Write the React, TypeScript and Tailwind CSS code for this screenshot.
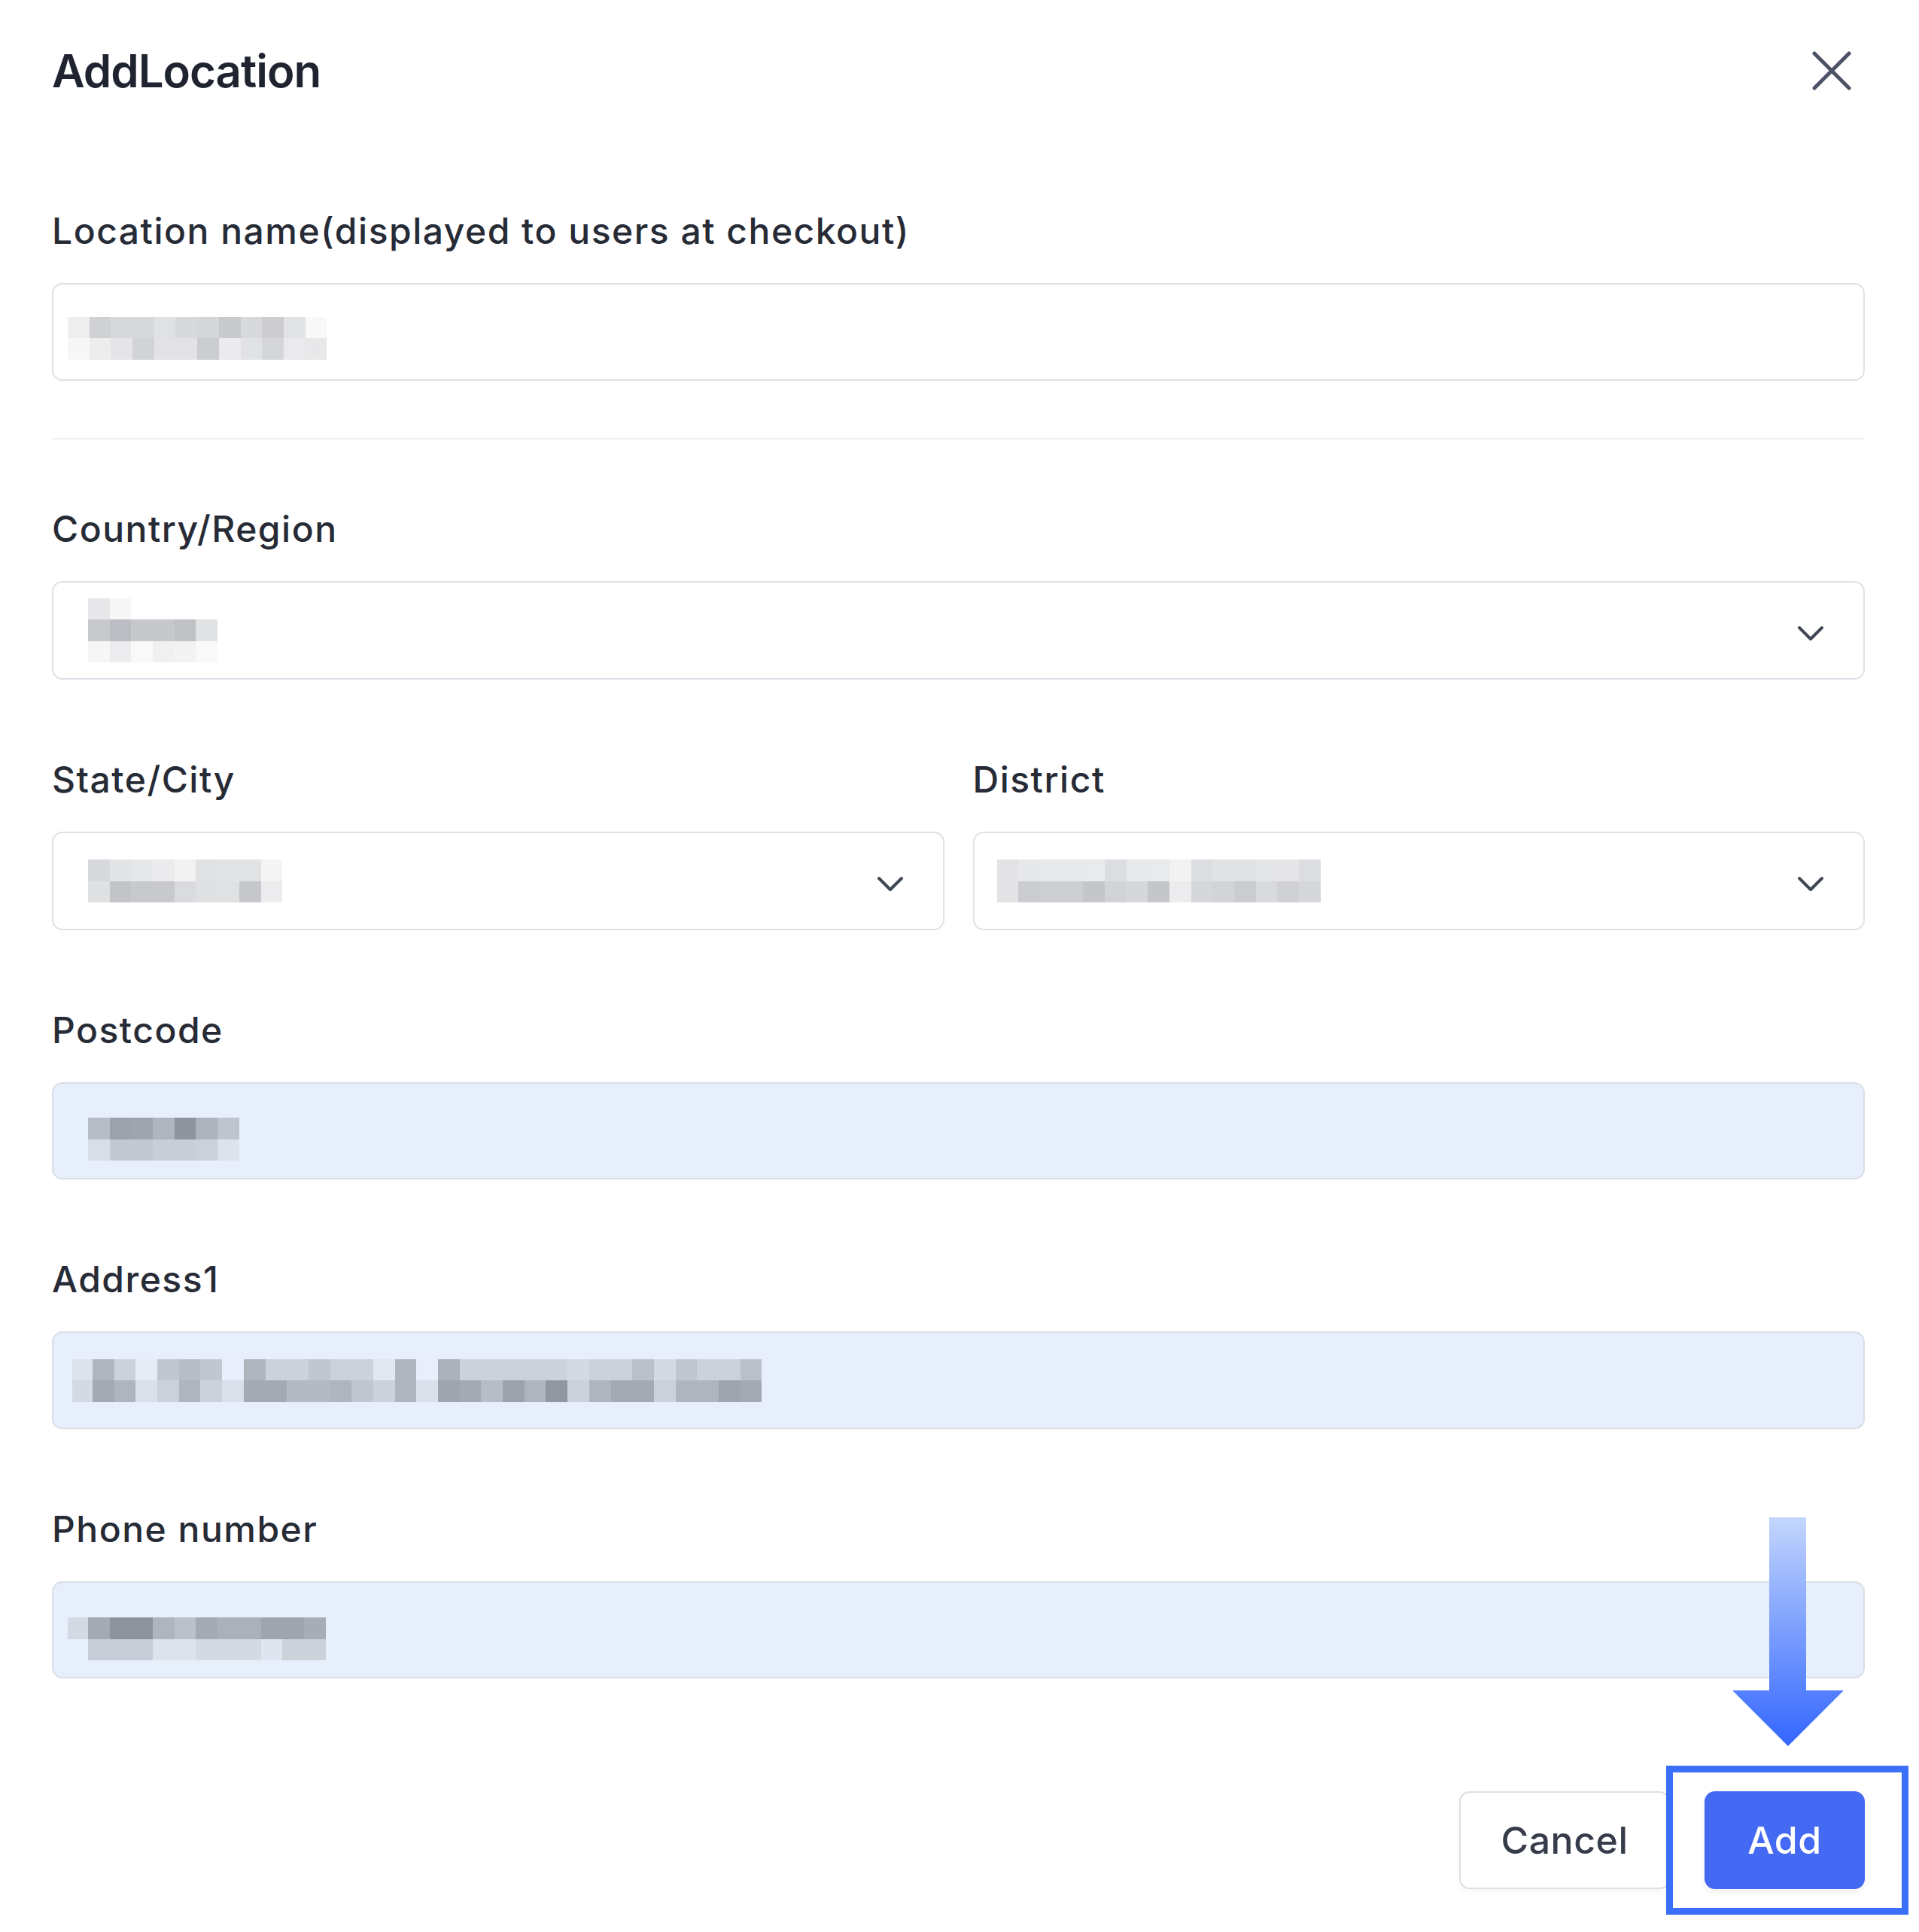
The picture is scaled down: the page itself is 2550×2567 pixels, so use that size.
import React from "react";

type Blob = { rows: string[][]; lead?: string[] };

const PixelBlob = ({ rows, lead }: Blob) => (
  <div className="flex">
    {lead && (
      <div className="flex flex-col">
        {lead.map((c, i) => (
          <div key={i} className="w-[27px] h-[28.5px]" style={{ backgroundColor: c }} />
        ))}
      </div>
    )}
    <div className="flex flex-col">
      {rows.map((r, i) => (
        <div key={i} className="flex">
          {r.map((c, j) => (
            <div key={j} className="w-[28.7px] h-[28.5px]" style={{ backgroundColor: c }} />
          ))}
        </div>
      ))}
    </div>
  </div>
);

const Chevron = () => (
  <svg width="36" height="22" viewBox="0 0 36 22" fill="none" className="mt-[8px] shrink-0">
    <polyline points="3,3 18,18 33,3" stroke="#3f4654" strokeWidth="4" strokeLinecap="round" strokeLinejoin="round" />
  </svg>
);

const Label = ({ children }: { children: React.ReactNode }) => (
  <div className="text-[48px] leading-[58px] font-medium text-[#272b36] tracking-[1.5px]">{children}</div>
);

const locationBlob: string[][] = [
  ["#eeeeef", "#d0d1d5", "#d8d9dc", "#d8d9dc", "#e0e1e3", "#d8d9dc", "#d5d6d9", "#c9cacd", "#d8d9dc", "#cdcdd1", "#e2e3e5", "#f8f8f8"],
  ["#f7f7f7", "#ededee", "#e5e5e7", "#d2d3d6", "#e3e3e5", "#e3e3e5", "#cccdd1", "#ebebed", "#e1e2e4", "#d5d6d9", "#eaeaec", "#e8e8ea"],
];

const countryBlob: string[][] = [
  ["#e8e8ea", "#f7f7f7", "#ffffff", "#ffffff", "#ffffff", "#ffffff"],
  ["#c8c9cd", "#bcbdc2", "#c7c8cc", "#c7c8cc", "#c0c1c5", "#e1e2e4"],
  ["#f6f6f7", "#ececee", "#f9f9f9", "#f0f0f1", "#f3f3f4", "#f9f9f9"],
];

const stateBlob: string[][] = [
  ["#d7d8db", "#e3e4e6", "#e6e7e9", "#ebebed", "#f2f2f3", "#e0e1e3", "#e2e3e5", "#e2e3e5", "#f5f5f6"],
  ["#dfe0e2", "#c3c4c8", "#c8c9cd", "#c8c9cd", "#dadbde", "#dfe0e2", "#e0e1e3", "#c6c7cb", "#ececee"],
];

const districtBlob: string[][] = [
  ["#e3e3e5", "#e7e8ea", "#e8e9eb", "#e8e9eb", "#e9eaec", "#dcdde0", "#e8e9eb", "#e9eaec", "#f2f2f3", "#dcdde0", "#e1e2e4", "#e1e2e4", "#e4e5e7", "#e6e6e8", "#dcdde0"],
  ["#e3e3e5", "#cbccd0", "#cecfd3", "#cecfd3", "#c5c6ca", "#d2d3d6", "#d6d7da", "#c5c6ca", "#ececee", "#d6d7da", "#d3d4d7", "#cbccd0", "#d9dadd", "#d0d1d5", "#d6d7da"],
];

const postBlob: string[][] = [
  ["#b8bcc6", "#9da1ab", "#a0a4ae", "#b0b4be", "#8f939d", "#aeb2bc", "#c0c4ce"],
  ["#d8dde8", "#c4c8d3", "#c4c8d3", "#c9cdd8", "#c9cdd8", "#ccd0db", "#dde2ec"],
];

const addrPairs: [string, string][] = [
  ["#b0b4bd", "#a5a9b2"], ["#cdd1da", "#b0b4bd"], ["#e6ebf6", "#dadfea"], ["#c2c6d0", "#cbd0da"],
  ["#b8bcc6", "#b0b4bd"], ["#c2c6d0", "#cdd1da"], ["#e8eefb", "#dadfea"], ["#b0b4bd", "#a5a9b2"],
  ["#cdd1da", "#a5a9b2"], ["#cdd1da", "#b5b9c3"], ["#c2c6d0", "#b5b9c3"], ["#cdd1da", "#b0b4bd"],
  ["#cdd1da", "#c2c6d0"], ["#e2e7f1", "#cdd1da"], ["#b0b4bd", "#b0b4bd"], ["#e8eefb", "#dadfea"],
  ["#acb0ba", "#a0a4ae"], ["#cdd1da", "#a5a9b2"], ["#cdd1da", "#b8bcc6"], ["#cdd1da", "#9ea2ac"],
  ["#cdd1da", "#b0b4bd"], ["#cdd1da", "#9196a0"], ["#d5d9e3", "#cdd1da"], ["#cdd1da", "#b0b4bd"],
  ["#cdd1da", "#a5a9b2"], ["#bcc0ca", "#a5a9b2"], ["#d5d9e3", "#cdd1da"], ["#c2c6d0", "#b0b4bd"],
  ["#cdd1da", "#b0b4bd"], ["#cdd1da", "#a0a4ae"], ["#bcc0ca", "#a5a9b2"],
];
const addrBlob: string[][] = [addrPairs.map((p) => p[0]), addrPairs.map((p) => p[1])];

const phonePairs: [string, string][] = [
  ["#a5a9b2", "#c9cdd8"], ["#8e929c", "#c9cdd8"], ["#8e929c", "#c9cdd8"], ["#b0b4bd", "#dde2ec"],
  ["#bcc0ca", "#dde2ec"], ["#a5a9b2", "#d5d9e3"], ["#acb0ba", "#d5d9e3"], ["#acb0ba", "#d5d9e3"],
  ["#a0a4ae", "#e0e4ee"], ["#a0a4ae", "#cdd1da"], ["#a8acb6", "#cdd1da"],
];
const phoneBlob: string[][] = [phonePairs.map((p) => p[0]), phonePairs.map((p) => p[1])];

export default function App() {
  return (
    <div className="relative w-[2550px] h-[2567px] overflow-hidden bg-white font-[Inter,Roboto,sans-serif] pl-[69px] pr-[72px] pt-[58px]">
      {/* Header */}
      <div className="flex h-[72px] items-center justify-between">
        <h1 className="text-[60px] leading-[72px] font-semibold tracking-[-1px] text-[#1f2430]">AddLocation</h1>
        <svg width="52" height="52" viewBox="0 0 52 52" className="mr-[18px]">
          <line x1="3" y1="3" x2="49" y2="49" stroke="#4b5263" strokeWidth="5" strokeLinecap="round" />
          <line x1="49" y1="3" x2="3" y2="49" stroke="#4b5263" strokeWidth="5" strokeLinecap="round" />
        </svg>
      </div>

      {/* Location name */}
      <div className="mt-[148px]">
        <Label>Location name(displayed to users at checkout)</Label>
        <div className="mt-[40px] flex h-[130px] items-center rounded-[14px] border-2 border-[#dfe1e8] bg-white pl-[19px]">
          <div className="mt-[16px]">
            <PixelBlob rows={locationBlob} />
          </div>
        </div>
      </div>

      <div className="mt-[76px] h-[2px] bg-[#eff0f3]" />

      {/* Country */}
      <div className="mt-[90px]">
        <Label>Country/Region</Label>
        <div className="mt-[40px] flex h-[131px] items-center justify-between rounded-[14px] border-2 border-[#dfe1e8] bg-white pl-[46px] pr-[52px]">
          <PixelBlob rows={countryBlob} />
          <Chevron />
        </div>
      </div>

      {/* State / District */}
      <div className="mt-[104px] grid grid-cols-2 gap-x-[38px]">
        <div>
          <Label>State/City</Label>
          <div className="mt-[40px] flex h-[131px] items-center justify-between rounded-[14px] border-2 border-[#dfe1e8] bg-white pl-[46px] pr-[52px]">
            <PixelBlob rows={stateBlob} />
            <Chevron />
          </div>
        </div>
        <div>
          <Label>District</Label>
          <div className="mt-[40px] flex h-[131px] items-center justify-between rounded-[14px] border-2 border-[#dfe1e8] bg-white pl-[30px] pr-[52px]">
            <PixelBlob rows={districtBlob} />
            <Chevron />
          </div>
        </div>
      </div>

      {/* Postcode */}
      <div className="mt-[104px]">
        <Label>Postcode</Label>
        <div className="mt-[40px] flex h-[129px] items-center rounded-[14px] border-2 border-[#d9dde6] bg-[#e8effc] pl-[46px]">
          <div className="mt-[22px]">
            <PixelBlob rows={postBlob} />
          </div>
        </div>
      </div>

      {/* Address1 */}
      <div className="mt-[104px]">
        <Label>Address1</Label>
        <div className="mt-[40px] flex h-[130px] items-center rounded-[14px] border-2 border-[#d9dde6] bg-[#e8effc] pl-[25px]">
          <PixelBlob rows={addrBlob} lead={["#dde2ec", "#d5d9e3"]} />
        </div>
      </div>

      {/* Phone number */}
      <div className="mt-[104px]">
        <Label>Phone number</Label>
        <div className="mt-[40px] flex h-[129px] items-center rounded-[14px] border-2 border-[#d9dde6] bg-[#e8effc] pl-[19px]">
          <div className="mt-[24px]">
            <PixelBlob rows={phoneBlob} lead={["#d5d9e3", "#e8effc"]} />
          </div>
        </div>
      </div>

      {/* Footer buttons */}
      <div className="mt-[150px] flex justify-end gap-[46px]">
        <button className="flex h-[130px] w-[280px] items-center justify-center rounded-[14px] border-2 border-[#dcdfe6] bg-white text-[50px] font-medium tracking-[0.5px] text-[#363c4a] shadow-[0_4px_8px_rgba(0,0,0,0.04)]">
          Cancel
        </button>
        <button className="flex h-[130px] w-[213px] items-center justify-center rounded-[14px] bg-[#4469f2] text-[50px] font-medium tracking-[0.5px] text-white shadow-[0_4px_8px_rgba(0,0,0,0.06)]">
          Add
        </button>
      </div>

      {/* Annotation: highlight box */}
      <div className="absolute left-[2214px] top-[2346px] h-[198px] w-[322px] border-[9px] border-[#3b6ff9]" />

      {/* Annotation: arrow */}
      <svg className="absolute left-[2300px] top-[2016px]" width="152" height="306" viewBox="0 0 152 306">
        <defs>
          <linearGradient id="arrowGrad" x1="0" y1="0" x2="0" y2="1">
            <stop offset="0" stopColor="#c3d6fd" />
            <stop offset="1" stopColor="#3366ff" />
          </linearGradient>
        </defs>
        <polygon points="51,0 100,0 100,230 150,230 76,304 2,230 51,230" fill="url(#arrowGrad)" />
      </svg>
    </div>
  );
}
